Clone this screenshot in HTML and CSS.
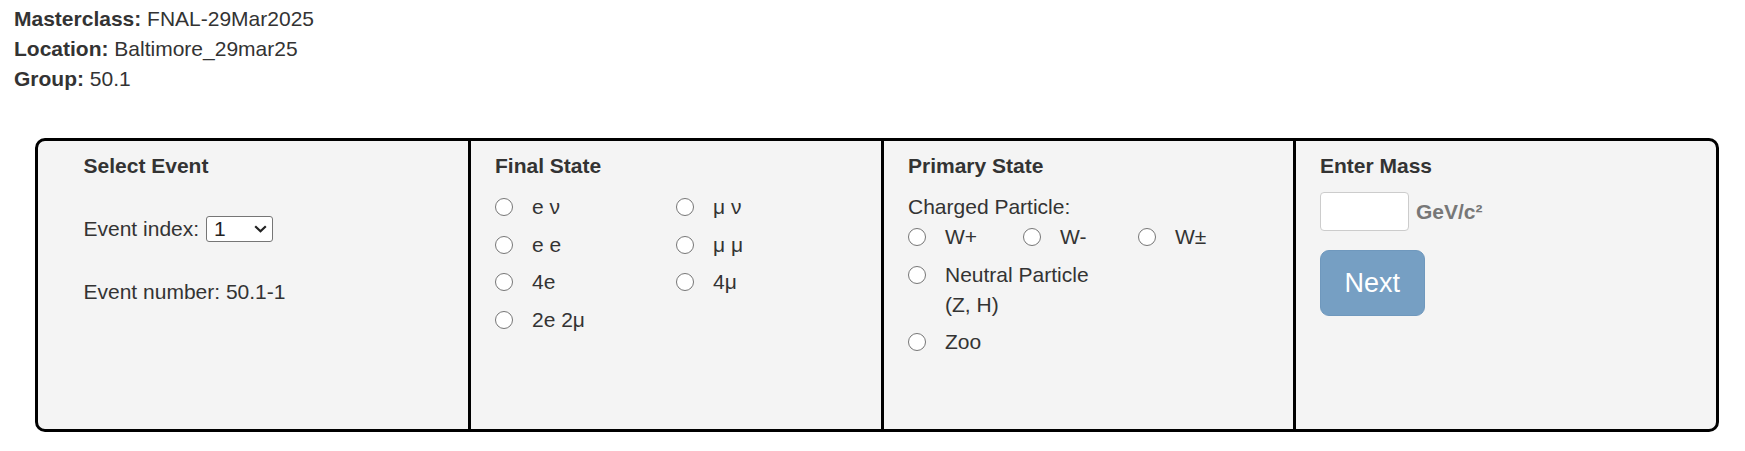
FILE: index.html
```html
<!DOCTYPE html>
<html>
<head>
<meta charset="utf-8">
<link rel="stylesheet" href="styles.css">
</head>
<body>
<div class="info">
  <div class="info-line"><b>Masterclass:</b> FNAL-29Mar2025</div>
  <div class="info-line"><b>Location:</b> Baltimore_29mar25</div>
  <div class="info-line"><b>Group:</b> 50.1</div>
</div>

<div class="panel">
  <div class="col col-first">
    <div class="heading">Select Event</div>
    <div class="event-row">
      <span>Event index:</span>
      <span class="select-wrap">
        <select class="select"><option>1</option></select>
        <svg class="chev" width="13" height="8" viewBox="0 0 13 8"><path d="M1.2 1.2 L6.5 6.3 L11.8 1.2" fill="none" stroke="#222" stroke-width="2.2"/></svg>
      </span>
    </div>
    <div class="event-number">Event number: 50.1-1</div>
  </div>

  <div class="col">
    <div class="heading">Final State</div>
    <div class="fs-grid">
      <label class="opt"><input type="radio" name="fs" class="radio"><span>e ν</span></label>
      <label class="opt"><input type="radio" name="fs" class="radio"><span>μ ν</span></label>
      <label class="opt"><input type="radio" name="fs" class="radio"><span>e e</span></label>
      <label class="opt"><input type="radio" name="fs" class="radio"><span>μ μ</span></label>
      <label class="opt"><input type="radio" name="fs" class="radio"><span>4e</span></label>
      <label class="opt"><input type="radio" name="fs" class="radio"><span>4μ</span></label>
      <label class="opt"><input type="radio" name="fs" class="radio"><span>2e 2μ</span></label>
    </div>
  </div>

  <div class="col">
    <div class="heading">Primary State</div>
    <div class="line">Charged Particle:</div>
    <div class="w-row">
      <label class="opt w-opt"><input type="radio" name="ps" class="radio"><span>W+</span></label>
      <label class="opt w-opt"><input type="radio" name="ps" class="radio"><span>W-</span></label>
      <label class="opt w-opt"><input type="radio" name="ps" class="radio"><span>W±</span></label>
    </div>
    <label class="opt opt-block"><input type="radio" name="ps" class="radio"><span class="wrap-text">Neutral Particle (Z, H)</span></label>
    <label class="opt opt-block"><input type="radio" name="ps" class="radio"><span>Zoo</span></label>
  </div>

  <div class="col">
    <div class="heading">Enter Mass</div>
    <div class="mass-row">
      <input type="text" class="mass-input">
      <span class="unit">GeV/c²</span>
    </div>
    <button class="next-btn" type="button">Next</button>
  </div>
</div>
</body>
</html>
```

FILE: styles.css
```css
html, body {
  margin: 0;
  padding: 0;
  background: #ffffff;
}

body {
  font-family: "Liberation Sans", Arial, sans-serif;
  font-size: 21px;
  line-height: 30px;
  color: #333333;
}

.info {
  padding: 4px 0 0 14px;
}

.info-line {
  height: 30px;
}

.panel {
  margin: 44px 0 0 35px;
  width: 1684px;
  height: 294px;
  box-sizing: border-box;
  border: 3px solid #000000;
  border-radius: 10px;
  background: #f4f4f4;
  display: grid;
  grid-template-columns: 430px 413px 412px 1fr;
  overflow: hidden;
}

.col {
  box-sizing: border-box;
  border-left: 3px solid #000000;
  padding: 9.5px 20px 0 24px;
}

.col-first {
  border-left: none;
  padding-left: 45.5px;
}

.heading {
  font-weight: bold;
  margin-bottom: 11.5px;
}

.event-row {
  display: flex;
  align-items: center;
  height: 30px;
  margin-top: 33px;
}

.select-wrap {
  position: relative;
  display: inline-block;
  margin-left: 7px;
  height: 26px;
}

.select {
  -webkit-appearance: none;
  appearance: none;
  width: 67px;
  height: 26px;
  box-sizing: border-box;
  border: 1px solid #767676;
  border-radius: 3px;
  background: #ffffff;
  font-family: "Liberation Sans", Arial, sans-serif;
  font-size: 21px;
  line-height: 24px;
  color: #222222;
  padding: 0 0 0 7px;
  margin: 0;
  display: block;
}

.chev {
  position: absolute;
  right: 6px;
  top: 9px;
  pointer-events: none;
}

.event-number {
  margin-top: 33px;
  height: 30px;
}

.fs-grid {
  display: grid;
  grid-template-columns: 181px 181px;
  row-gap: 7.5px;
}

.opt {
  display: flex;
  align-items: flex-start;
  line-height: 30px;
}

.radio {
  -webkit-appearance: none;
  appearance: none;
  width: 18px;
  height: 18px;
  box-sizing: border-box;
  border: 1.5px solid #767676;
  border-radius: 50%;
  background: #ffffff;
  margin: 6px 19px 0 0;
  flex: none;
}

.line {
  height: 30px;
}

.w-row {
  display: flex;
}

.w-opt {
  width: 115px;
}

.opt-block {
  margin-top: 7.5px;
}

.wrap-text {
  max-width: 170px;
}

.mass-row {
  display: flex;
  align-items: center;
  margin-top: 0.5px;
}

.mass-input {
  width: 89px;
  height: 39px;
  box-sizing: border-box;
  border: 1px solid #cccccc;
  border-radius: 4px;
  background: #ffffff;
  margin: 0;
  padding: 0;
}

.unit {
  font-weight: bold;
  color: #777777;
  margin-left: 7px;
}

.next-btn {
  display: block;
  margin-top: 18.5px;
  font-family: "Liberation Sans", Arial, sans-serif;
  font-size: 27px;
  line-height: 36px;
  padding: 14px 23.5px;
  border: 1.5px solid #6f98bd;
  border-radius: 9px;
  background: #769fc3;
  color: #ffffff;
}
```
